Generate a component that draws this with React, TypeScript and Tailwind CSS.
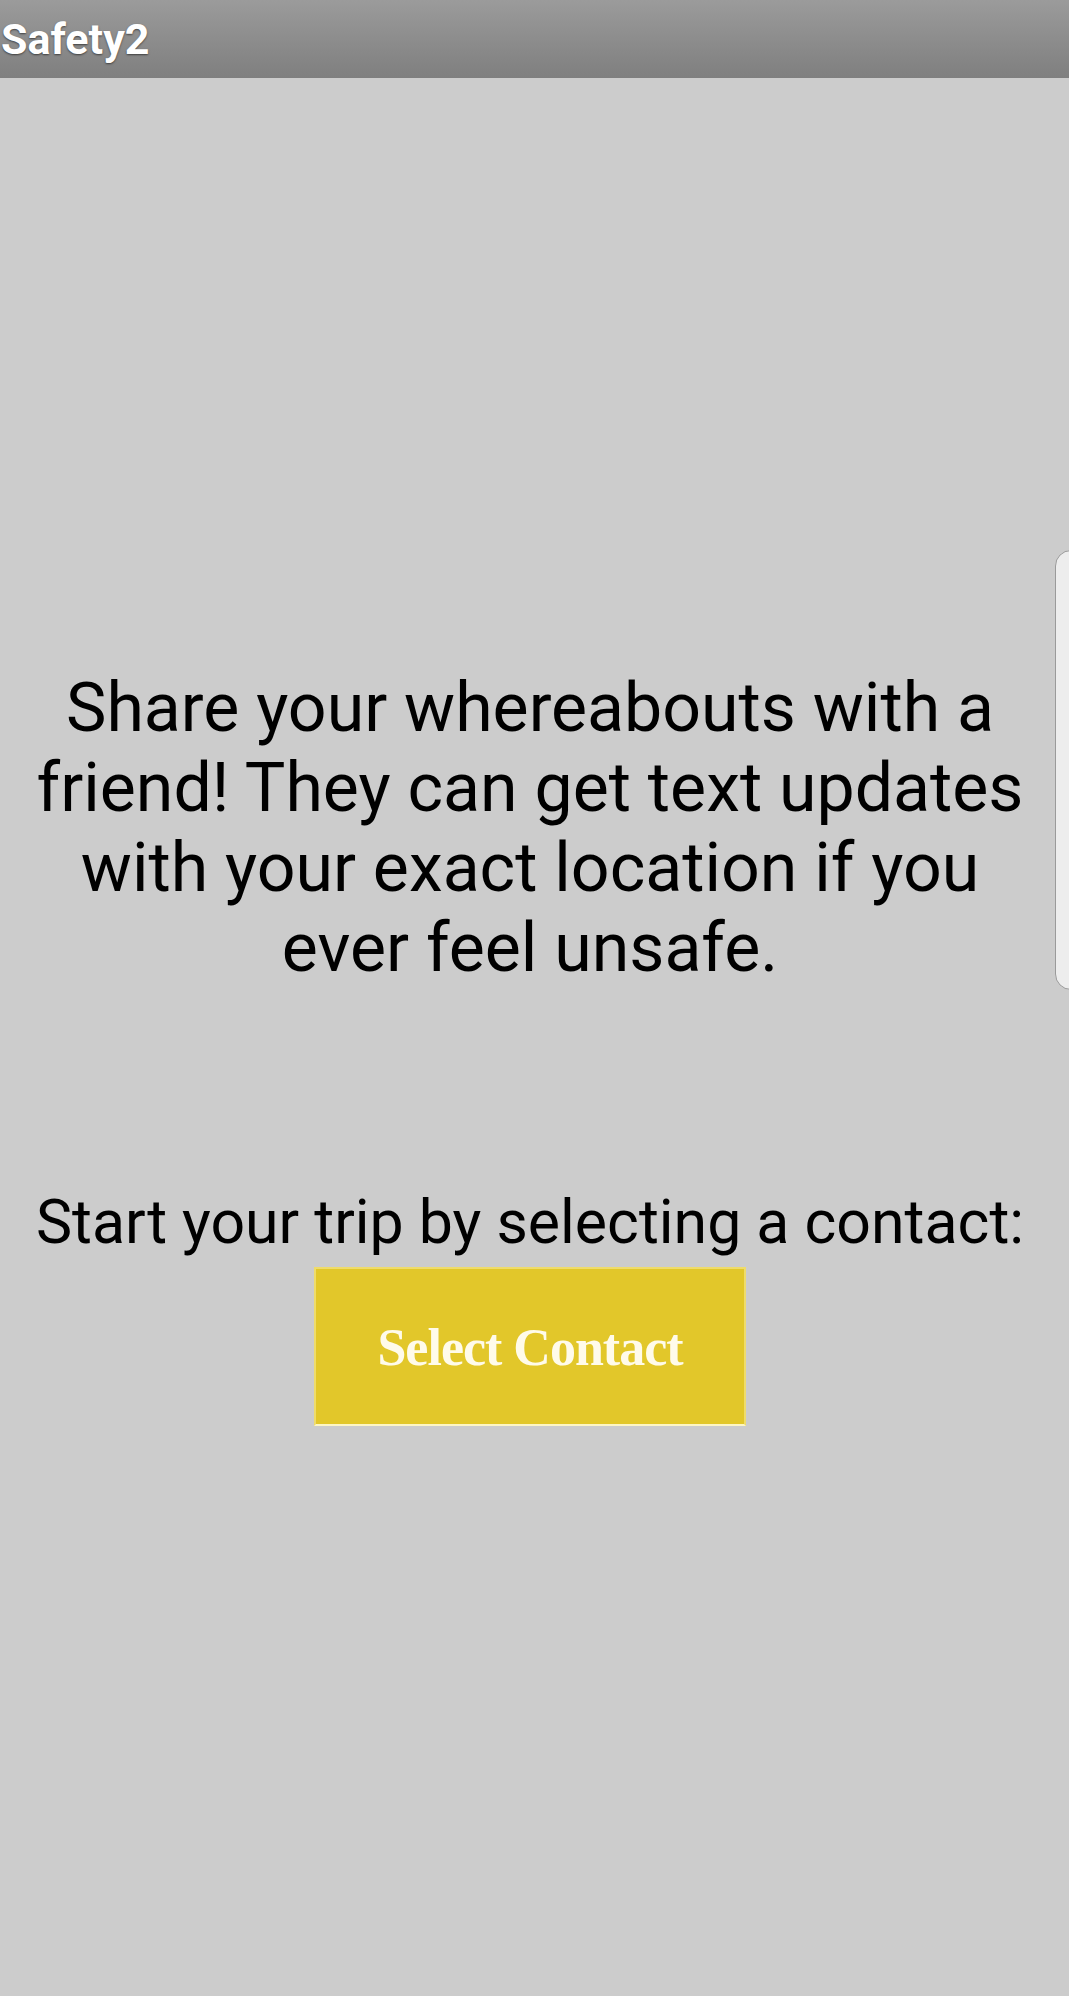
import React from 'react';

export default function App() {
  return (
    <div
      className="relative min-h-[1996px] w-full overflow-hidden bg-[#cccccc]"
      style={{ fontFamily: 'Roboto, "Noto Sans", sans-serif' }}
    >
      {/* Title bar */}
      <header className="flex h-[78px] items-center bg-gradient-to-b from-[#9b9b9b] to-[#7f7f7f] px-[1px]">
        <h1 className="text-[43px] font-bold leading-none text-white [text-shadow:0_1px_2px_rgba(0,0,0,0.55)]">
          Safety2
        </h1>
      </header>

      <main className="flex flex-col items-center pl-[22px] pr-[31px] text-center text-black">
        <p className="mt-[590px] text-[68px] leading-[80px]">
          Share your whereabouts with a friend! They can get text updates with your exact location if you ever feel
          unsafe.
        </p>

        <p className="mt-[200px] text-[60.8px] leading-[70px] whitespace-nowrap">
          Start your trip by selecting a contact:
        </p>

        <button
          type="button"
          className="mt-[9px] flex h-[159px] w-[432px] items-center justify-center border-2 border-[#efdc6a] border-b-[#fdf6c4] bg-[#e2c72a] pt-[2px] text-[52px] font-bold tracking-[-1px] text-[#fffbea]"
          style={{ fontFamily: '"Liberation Serif", "DejaVu Serif", serif' }}
        >
          Select Contact
        </button>
      </main>

      {/* Edge panel handle */}
      <div className="absolute right-[-20px] top-[550px] h-[440px] w-[34px] rounded-l-[16px] border border-[#9a9a9a] bg-[#ededed]" />
    </div>
  );
}
